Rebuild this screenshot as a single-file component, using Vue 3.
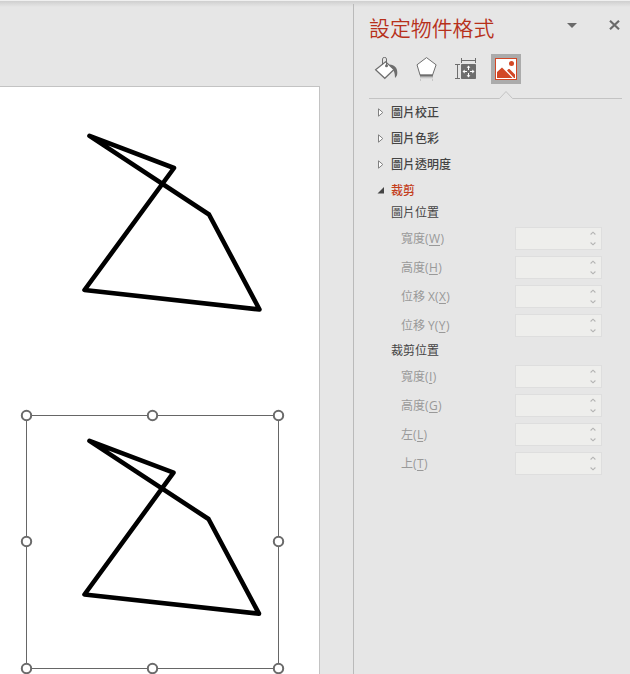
<script setup>
import { ref } from 'vue'

const sections = ['圖片校正', '圖片色彩', '圖片透明度']

const groups = [
  {
    title: '圖片位置',
    fields: [
      { label: '寬度', key: 'W' },
      { label: '高度', key: 'H' },
      { label: '位移 X', key: 'X' },
      { label: '位移 Y', key: 'Y' }
    ]
  },
  {
    title: '裁剪位置',
    fields: [
      { label: '寬度', key: 'I' },
      { label: '高度', key: 'G' },
      { label: '左', key: 'L' },
      { label: '上', key: 'T' }
    ]
  }
]

const handles = [
  [26.5, 415.5], [152.5, 415.5], [278.5, 415.5],
  [26.5, 541.5], [278.5, 541.5],
  [26.5, 668.5], [152.5, 668.5], [278.5, 668.5]
]

const activeTab = ref('picture')
</script>

<template>
  <div class="window">
    <div class="workspace">
      <div class="slide">
        <svg class="drawing" width="319" height="587" viewBox="0 87 319 587">
          <polygon class="shape" points="89.5,135.8 174,168 84.5,290 259.5,309.5 209,214.5" />
          <polygon class="shape" points="89.5,440.8 173.5,472.7 84.5,594.5 259,613.7 208.5,519" />
          <rect class="selection" x="26.5" y="415.5" width="252" height="253" />
          <circle v-for="(h, i) in handles" :key="i" class="handle" :cx="h[0]" :cy="h[1]" r="4.7" />
        </svg>
      </div>
    </div>

    <aside class="pane">
      <header class="pane-header">
        <h1>設定物件格式</h1>
        <button class="icon-btn menu-btn" aria-label="menu">
          <svg width="10" height="5" viewBox="0 0 10 5"><path d="M0 0h10L5 5z" fill="#6a6a6a" /></svg>
        </button>
        <button class="icon-btn" aria-label="close">
          <svg width="11" height="10" viewBox="0 0 11 10">
            <path d="M1 .8l9 8.4M10 .8L1 9.2" stroke="#6a6a6a" stroke-width="2.2" />
          </svg>
        </button>
      </header>

      <nav class="tabs">
        <button class="tab" @click="activeTab = 'fill'">
          <svg width="30" height="30" viewBox="0 0 30 30">
            <path d="M18.5 10.5c5 .5 8 3 7.8 8.5 0 2.500-1 3.500-2.300 5 0-5-1-8.500-4.500-10z" fill="#6e6e6e" />
            <path d="M4.600 15.700l10-7.900 8.400 7.700-9.200 8.800z" fill="#fff" stroke="#6e6e6e" stroke-width="1.2" />
            <path d="M11.5 11V4.800q0-1.300 2-1.300t2 1.300V12" fill="none" stroke="#6e6e6e" />
            <circle cx="15.5" cy="11.7" r="1.5" fill="#6e6e6e" />
          </svg>
        </button>
        <button class="tab" @click="activeTab = 'effects'">
          <svg width="30" height="30" viewBox="0 0 30 30">
            <defs>
              <linearGradient id="reflection" x1="0" y1="0" x2="0" y2="1">
                <stop offset="0" stop-color="#a8a8a8" />
                <stop offset="1" stop-color="#e6e6e6" />
              </linearGradient>
            </defs>
            <path d="M9.5 22v5M21.5 22v5" stroke="#c6c6c6" />
            <path d="M9 22h13v3H9z" fill="url(#reflection)" />
            <path d="M15.5 3.600l9.600 7.200-3.700 10.700H9.200L6 10.800z" fill="#fff" stroke="#6e6e6e" />
            <path d="M9 21.300h12.800" stroke="#6e6e6e" stroke-width="2" />
          </svg>
        </button>
        <button class="tab" @click="activeTab = 'size'">
          <svg width="30" height="30" viewBox="0 0 30 30">
            <path d="M10.5 4v5M24.5 4v5M10.5 6.500h14M4 10.500h5M4 24.500h5M6.500 10.500v14" fill="none" stroke="#6e6e6e" />
            <rect x="10" y="10" width="15" height="15" rx=".8" fill="#6e6e6e" />
            <path d="M17.5 13v3M17.5 19v3M13 17.500h3M19 17.500h3" stroke="#fff" />
            <path d="M17.5 11.500l1.900 2.200h-3.800zM17.500 23.500l1.900-2.200h-3.800zM11.500 17.500l2.200-1.900v3.800zM23.500 17.500l-2.200-1.900v3.800z" fill="#fff" />
          </svg>
        </button>
        <button class="tab" :class="{ active: activeTab === 'picture' }" @click="activeTab = 'picture'">
          <svg width="30" height="30" viewBox="0 0 30 30">
            <rect x="4.5" y="4.5" width="21" height="21" fill="#fff" stroke="#d24726" />
            <circle cx="20.5" cy="9.5" r="2.5" fill="#d24726" />
            <path d="M6 24v-6l5-4.500L21.500 24zM16 16.500l1.500-1.500h1L24 20.500V24h-1z" fill="#d24726" />
          </svg>
        </button>
      </nav>

      <div class="divider">
        <svg width="253" height="9" viewBox="0 0 253 9">
          <path d="M0 7.500h130.500l6.500-7 6.500 7H253" fill="none" stroke="#c3c3c3" />
        </svg>
      </div>

      <ul class="sections">
        <li v-for="name in sections" :key="name" class="section">
          <svg class="arrow" width="7" height="9" viewBox="0 0 7 9">
            <path d="M1.5 .8v7.400l4.300-3.700z" fill="#fff" stroke="#808080" />
          </svg>
          <span>{{ name }}</span>
        </li>
        <li class="section open">
          <svg class="arrow" width="7" height="7" viewBox="0 0 7 7"><path d="M7 0v6.500H.5z" fill="#444" /></svg>
          <span>裁剪</span>
        </li>
      </ul>

      <div v-for="group in groups" :key="group.title" class="group">
        <h2>{{ group.title }}</h2>
        <div v-for="field in group.fields" :key="field.key" class="field">
          <label>{{ field.label }}(<u>{{ field.key }}</u>)</label>
          <div class="spinner">
            <svg width="6" height="15" viewBox="0 0 6 15">
              <path d="M.6 3.500L3 1.200l2.400 2.300M.6 11.500L3 13.800l2.400-2.300" fill="none" stroke="#b4b4b4" stroke-width="1.1" />
            </svg>
          </div>
        </div>
      </div>
    </aside>
  </div>
</template>

<style>
body {
  background: #e6e6e6;
}
</style>

<style scoped>
.window {
  display: flex;
  width: 630px;
  height: 674px;
  overflow: hidden;
  box-sizing: border-box;
  padding-top: 4px;
  background: linear-gradient(#f0f0f0 0, #f0f0f0 1px, #cfcfcf 1px, #e6e6e6 7px);
  font-family: "Open Sans", "Noto Sans CJK TC", sans-serif;
  font-size: 12px;
  color: #444;
}

.workspace {
  width: 353px;
  flex-shrink: 0;
  padding-top: 82px;
  box-sizing: border-box;
}

.slide {
  width: 319px;
  height: 588px;
  background: #fff;
  border-top: 1px solid #c3c3c3;
  border-right: 1px solid #c3c3c3;
}

.drawing {
  display: block;
}

.shape {
  fill: none;
  stroke: #000;
  stroke-width: 4.6;
  stroke-linejoin: round;
}

.selection {
  fill: none;
  stroke: #666;
}

.handle {
  fill: #fff;
  stroke: #6a6a6a;
  stroke-width: 2;
}

.pane {
  flex: 1;
  min-width: 0;
  border-left: 1px solid #bababa;
  padding: 8px 8px 0 15px;
}

.pane-header {
  display: flex;
  align-items: center;
  height: 32px;
}

h1 {
  flex: 1;
  margin: -2px 0 0;
  font-size: 20.9px;
  font-weight: 350;
  line-height: 32px;
  color: #b7301a;
  font-family: "Noto Sans CJK TC", sans-serif;
}

.icon-btn {
  display: flex;
  padding: 0;
  margin: -6px 2px 0 0;
  border: none;
  background: none;
}

.menu-btn {
  margin-right: 32px;
}

.tabs {
  display: flex;
  gap: 10px;
  margin: 10px 0 0 2px;
}

.tab {
  width: 30px;
  height: 30px;
  padding: 0;
  border: none;
  background: none;
}

.tab svg {
  display: block;
}

.tab.active {
  background: #ababab;
}

.divider {
  height: 8px;
  margin-top: 7px;
}

.divider svg {
  display: block;
}

.sections {
  list-style: none;
  margin: 0;
  padding: 0;
}

.section {
  display: flex;
  align-items: center;
  height: 26px;
  font-weight: 500;
}

.arrow {
  margin: 0 7px 0 8px;
}

.section.open {
  color: #c43e1c;
}

.group h2 {
  margin: 0 0 0 22px;
  height: 24px;
  font-size: 12px;
  font-weight: 400;
  line-height: 19px;
}

.group + .group h2 {
  height: 22px;
  line-height: 15px;
}

.field {
  display: flex;
  align-items: center;
  height: 23px;
  margin-bottom: 6px;
  padding: 0 20px 0 32px;
  color: #999;
}

.field label {
  flex: 1;
  margin-top: -2px;
}

.field u {
  padding: 0 .4px;
  text-underline-offset: 2px;
}

.spinner {
  display: flex;
  align-items: center;
  justify-content: flex-end;
  width: 87px;
  height: 23px;
  box-sizing: border-box;
  padding-right: 5px;
  border: 1px solid #dedede;
  background: #eeeeec;
}
</style>
